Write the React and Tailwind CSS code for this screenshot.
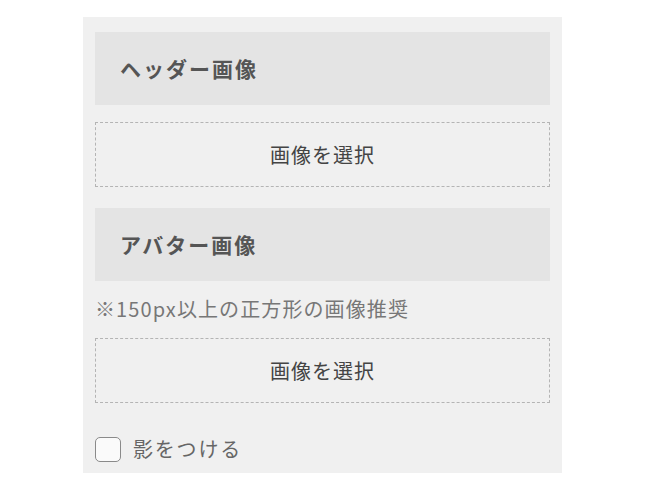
import React, { useState } from 'react'

const font = { fontFamily: '"Noto Sans CJK JP", "Noto Sans", sans-serif' };

const SectionTitle = ({ children }) => (
  <div className="h-[73px] bg-[#e4e4e4] flex items-center pl-[25px] text-[21px] font-bold tracking-[2px] text-[#555]">
    {children}
  </div>
);

const SelectButton = () => (
  <button className="w-full h-[65px] border border-dashed border-[#b4b4b4] flex items-center justify-center text-[20px] tracking-[1px] text-[#444] bg-[#f0f0f0]">
    画像を選択
  </button>
);

const App = () => {
  const [shadow, setShadow] = useState(false);

  return (
    <div className="w-[655px] h-[483px] bg-white" style={font}>
      <div className="ml-[83px] pt-[17px]">
        <div className="w-[479px] bg-[#f0f0f0] px-[12px] pt-[15px] pb-[11px]">
          <SectionTitle>ヘッダー画像</SectionTitle>
          <div className="mt-[17px]">
            <SelectButton />
          </div>

          <div className="mt-[21px]">
            <SectionTitle>アバター画像</SectionTitle>
          </div>
          <p className="mt-[15px] text-[20px] leading-[26px] tracking-[1.1px] text-[#777]">
            ※150px以上の正方形の画像推奨
          </p>
          <div className="mt-[16px]">
            <SelectButton />
          </div>

          <label className="mt-[33px] flex items-center gap-[12px] cursor-pointer">
            <span
              onClick={() => setShadow(!shadow)}
              className="w-[26px] h-[25px] rounded-[5px] border-[1.5px] border-[#8a8a8a] bg-[#fafafa] flex items-center justify-center"
            >
              {shadow && (
                <svg width="16" height="16" viewBox="0 0 16 16">
                  <path d="M3 8l3 3 7-7" stroke="#444" strokeWidth="2" fill="none" />
                </svg>
              )}
            </span>
            <span className="text-[20px] leading-[26px] tracking-[1.8px] text-[#666]">影をつける</span>
          </label>
        </div>
      </div>
    </div>
  );
}

export default App
